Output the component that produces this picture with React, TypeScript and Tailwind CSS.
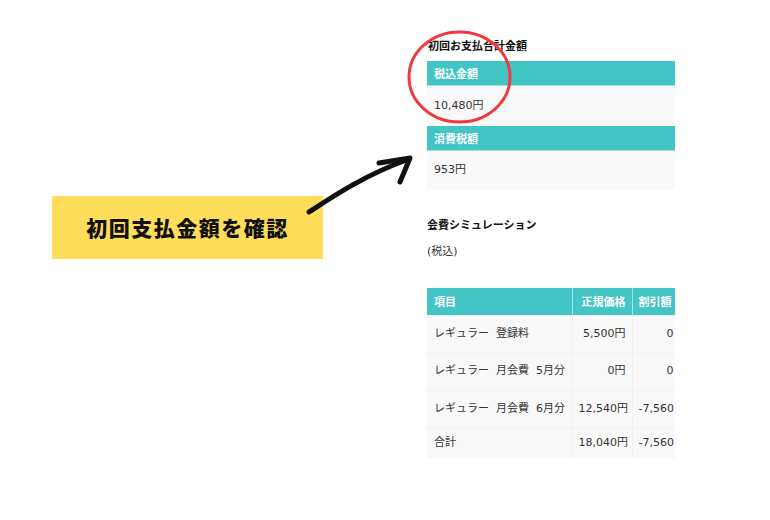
import React from "react";

const jp = { fontFamily: '"Noto Sans CJK JP", "Noto Sans", sans-serif' };
const body = { fontFamily: '"DejaVu Sans", "Noto Sans CJK JP", sans-serif' };

export default function App() {
  const rows = [
    { item: "レギュラー  登録料", price: "5,500円", disc: "0", h: "h-[38px]" },
    { item: "レギュラー  月会費  5月分", price: "0円", disc: "0", h: "h-[37px]" },
    { item: "レギュラー  月会費  6月分", price: "12,540円", disc: "-7,560", h: "h-[38px]" },
    { item: "合計", price: "18,040円", disc: "-7,560", h: "h-[30px]" },
  ];
  return (
    <div className="relative w-[770px] h-[520px] bg-white flex text-[#333]" style={jp}>
      <div className="w-[427px] shrink-0">
        <div className="ml-[52px] mt-[196px] w-[271px] h-[63px] bg-[#fedd5a] flex items-center justify-center">
          <span className="text-[21px] font-black text-[#111] tracking-[1.5px] leading-none">初回支払金額を確認</span>
        </div>
      </div>
      <div className="w-[248px] shrink-0 pt-[38px] text-[11px]">
        <div className="font-bold leading-[14px] text-[#111] pl-[1px]">初回お支払合計金額</div>
        <div className="mt-[9px] bg-[#43c5c6] h-[25px] flex items-center px-[7px] text-white font-bold border-b border-[#9fe0e0]">税込金額</div>
        <div className="bg-[#f9f9f9] h-[40px] flex items-center px-[7px]" style={body}>10,480円</div>
        <div className="bg-[#43c5c6] h-[25px] flex items-center px-[7px] text-white font-bold border-b border-[#9fe0e0]">消費税額</div>
        <div className="bg-[#f9f9f9] h-[38px] flex items-center px-[7px]" style={body}>953円</div>
        <div className="mt-[28px] font-bold leading-[14px] text-[#111]">会費シミュレーション</div>
        <div className="mt-[14px] leading-[14px]" style={body}>(税込)</div>
        <div className="mt-[29px] w-[248px] overflow-hidden">
          <table className="border-collapse w-[270px] table-fixed">
            <colgroup>
              <col className="w-[145px]" />
              <col className="w-[60px]" />
              <col className="w-[65px]" />
            </colgroup>
            <thead>
              <tr className="h-[27px] bg-[#43c5c6] text-white font-bold">
                <th className="text-left px-[7px] border-r border-[#a8e4e4] font-bold">項目</th>
                <th className="text-right px-[6px] border-r border-[#a8e4e4] font-bold whitespace-nowrap">正規価格</th>
                <th className="text-left px-[6px] font-bold whitespace-nowrap">割引額</th>
              </tr>
            </thead>
            <tbody style={body}>
              {rows.map((r, i) => (
                <tr key={i} className={`${r.h} bg-[#f9f9f9] border-t border-[#f1f1f1]`}>
                  <td className="px-[7px] whitespace-pre border-r border-[#f1f1f1]">{r.item}</td>
                  <td className="px-[6px] text-right whitespace-nowrap border-r border-[#f1f1f1]">{r.price}</td>
                  <td className="pl-[6px] whitespace-nowrap">
                    <span className="inline-block w-[35px] text-right">{r.disc}</span>
                  </td>
                </tr>
              ))}
            </tbody>
          </table>
        </div>
      </div>
      <svg className="absolute left-0 top-0 pointer-events-none" width="770" height="520" viewBox="0 0 770 520">
        <ellipse cx="459.5" cy="77" rx="50.5" ry="45" fill="none" stroke="#ef3b3e" strokeWidth="3" />
        <path d="M309 212 C 335 195, 365 175, 409 159" fill="none" stroke="#111" strokeWidth="5" strokeLinecap="round" />
        <path d="M379 163 L 410 158 L 400 182" fill="none" stroke="#111" strokeWidth="5" strokeLinecap="round" strokeLinejoin="round" />
      </svg>
    </div>
  );
}
